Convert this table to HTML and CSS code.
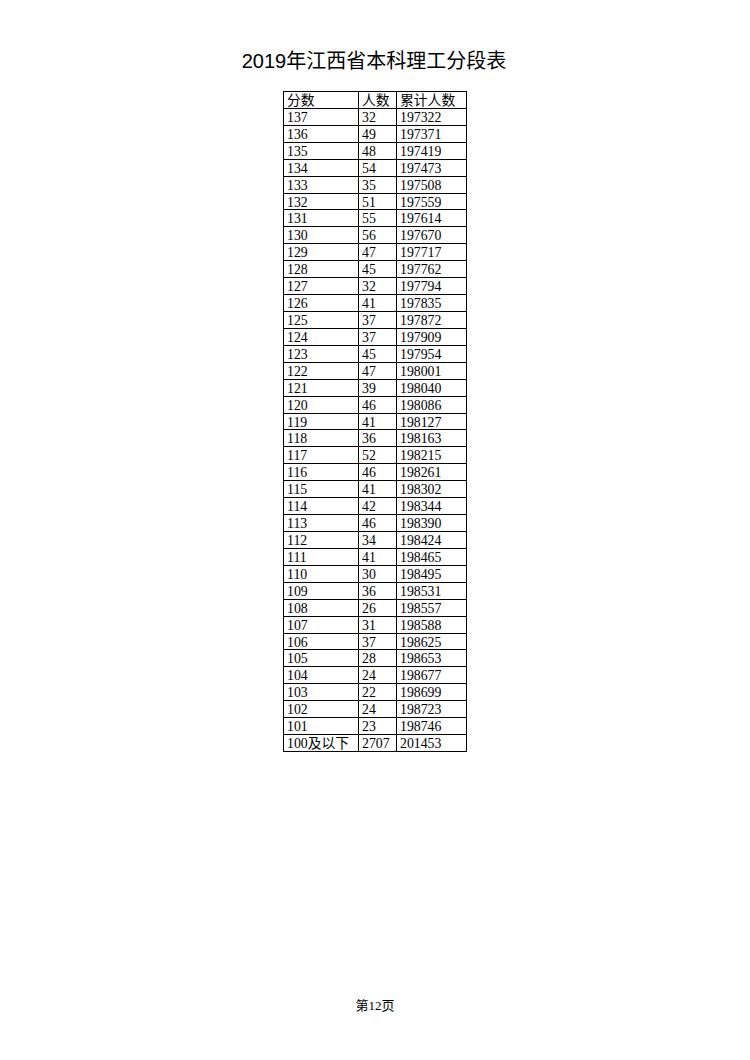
FILE: index.html
```html
<!DOCTYPE html>
<html lang="zh">
<head>
<meta charset="utf-8">
<link rel="stylesheet" href="styles.css">
</head>
<body>
<div class="page">
  <h1 class="title">2019年江西省本科理工分段表</h1>
  <div class="grid">
    <div>分数</div><div>人数</div><div>累计人数</div>
    <div>137</div><div>32</div><div>197322</div>
    <div>136</div><div>49</div><div>197371</div>
    <div>135</div><div>48</div><div>197419</div>
    <div>134</div><div>54</div><div>197473</div>
    <div>133</div><div>35</div><div>197508</div>
    <div>132</div><div>51</div><div>197559</div>
    <div>131</div><div>55</div><div>197614</div>
    <div>130</div><div>56</div><div>197670</div>
    <div>129</div><div>47</div><div>197717</div>
    <div>128</div><div>45</div><div>197762</div>
    <div>127</div><div>32</div><div>197794</div>
    <div>126</div><div>41</div><div>197835</div>
    <div>125</div><div>37</div><div>197872</div>
    <div>124</div><div>37</div><div>197909</div>
    <div>123</div><div>45</div><div>197954</div>
    <div>122</div><div>47</div><div>198001</div>
    <div>121</div><div>39</div><div>198040</div>
    <div>120</div><div>46</div><div>198086</div>
    <div>119</div><div>41</div><div>198127</div>
    <div>118</div><div>36</div><div>198163</div>
    <div>117</div><div>52</div><div>198215</div>
    <div>116</div><div>46</div><div>198261</div>
    <div>115</div><div>41</div><div>198302</div>
    <div>114</div><div>42</div><div>198344</div>
    <div>113</div><div>46</div><div>198390</div>
    <div>112</div><div>34</div><div>198424</div>
    <div>111</div><div>41</div><div>198465</div>
    <div>110</div><div>30</div><div>198495</div>
    <div>109</div><div>36</div><div>198531</div>
    <div>108</div><div>26</div><div>198557</div>
    <div>107</div><div>31</div><div>198588</div>
    <div>106</div><div>37</div><div>198625</div>
    <div>105</div><div>28</div><div>198653</div>
    <div>104</div><div>24</div><div>198677</div>
    <div>103</div><div>22</div><div>198699</div>
    <div>102</div><div>24</div><div>198723</div>
    <div>101</div><div>23</div><div>198746</div>
    <div>100及以下</div><div>2707</div><div>201453</div>
  </div>
  <div class="spacer"></div>
  <div class="footer">第12页</div>
</div>
</body>
</html>
```

FILE: styles.css
```css
html, body {
  margin: 0;
  padding: 0;
  background: #ffffff;
}

.page {
  width: 750px;
  height: 1060px;
  display: flex;
  flex-direction: column;
  align-items: center;
  font-family: "Liberation Serif", "Noto Sans CJK SC", serif;
  color: #000;
}

.title {
  margin: 49px 0 0 0;
  font-family: "Liberation Sans", "Noto Sans CJK SC", sans-serif;
  font-size: 20px;
  line-height: 24px;
  font-weight: 400;
  position: relative;
  left: -1px;
}

.grid {
  margin-top: 18px;
  display: grid;
  grid-template-columns: 74px 37px 69px;
  grid-auto-rows: 15.923px;
  gap: 1px;
  padding: 1px;
  background: #000;
  font-size: 13.8px;
}

.grid > div {
  background: #fff;
  padding-left: 3px;
  line-height: 17px;
  white-space: nowrap;
  overflow: hidden;
}

.spacer {
  flex: 1;
}

.footer {
  font-size: 13px;
  line-height: 16px;
  margin-bottom: 46px;
}
```
